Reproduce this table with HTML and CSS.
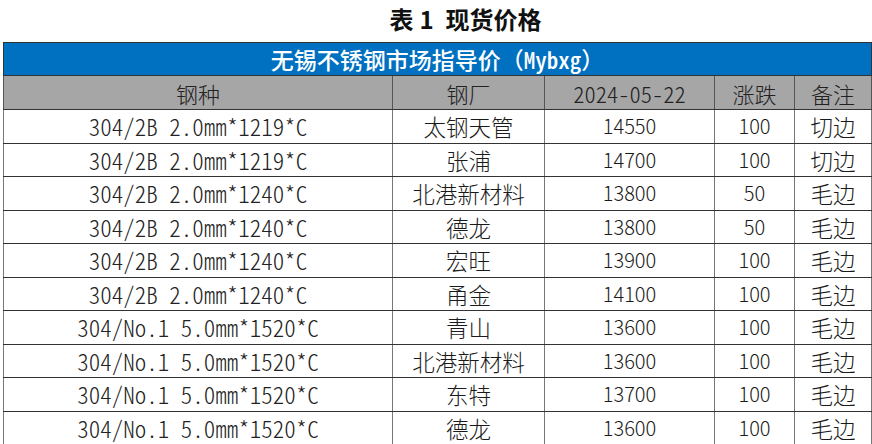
FILE: index.html
```html
<!DOCTYPE html>
<html lang="zh-CN">
<head>
<meta charset="utf-8">
<link rel="stylesheet" href="styles.css">
</head>
<body>
<div class="page">
  <h1 class="title">表<span class="num">1</span>现货价格</h1>
  <table class="price">
    <colgroup>
      <col class="c1"><col class="c2"><col class="c3"><col class="c4"><col class="c5">
    </colgroup>
    <thead>
      <tr class="banner"><th colspan="5">无锡不锈钢市场指导价（<span class="mono">Mybxg</span>）</th></tr>
      <tr class="head"><th>钢种</th><th>钢厂</th><th><span class="mono">2024-05-22</span></th><th>涨跌</th><th>备注</th></tr>
    </thead>
    <tbody>
      <tr><td><span class="mono">304/2B 2.0mm*1219*C</span></td><td>太钢天管</td><td class="n">14550</td><td class="n">100</td><td>切边</td></tr>
      <tr><td><span class="mono">304/2B 2.0mm*1219*C</span></td><td>张浦</td><td class="n">14700</td><td class="n">100</td><td>切边</td></tr>
      <tr><td><span class="mono">304/2B 2.0mm*1240*C</span></td><td>北港新材料</td><td class="n">13800</td><td class="n">50</td><td>毛边</td></tr>
      <tr><td><span class="mono">304/2B 2.0mm*1240*C</span></td><td>德龙</td><td class="n">13800</td><td class="n">50</td><td>毛边</td></tr>
      <tr><td><span class="mono">304/2B 2.0mm*1240*C</span></td><td>宏旺</td><td class="n">13900</td><td class="n">100</td><td>毛边</td></tr>
      <tr><td><span class="mono">304/2B 2.0mm*1240*C</span></td><td>甬金</td><td class="n">14100</td><td class="n">100</td><td>毛边</td></tr>
      <tr><td><span class="mono">304/No.1 5.0mm*1520*C</span></td><td>青山</td><td class="n">13600</td><td class="n">100</td><td>毛边</td></tr>
      <tr><td><span class="mono">304/No.1 5.0mm*1520*C</span></td><td>北港新材料</td><td class="n">13600</td><td class="n">100</td><td>毛边</td></tr>
      <tr><td><span class="mono">304/No.1 5.0mm*1520*C</span></td><td>东特</td><td class="n">13700</td><td class="n">100</td><td>毛边</td></tr>
      <tr><td><span class="mono">304/No.1 5.0mm*1520*C</span></td><td>德龙</td><td class="n">13600</td><td class="n">100</td><td>毛边</td></tr>
    </tbody>
  </table>
</div>
</body>
</html>
```

FILE: styles.css
```css
html, body {
  margin: 0;
  padding: 0;
  background: #ffffff;
  overflow: hidden;
}
body {
  font-family: "Noto Sans CJK SC", "Noto Sans", sans-serif;
  color: #1a1a1a;
}
.page {
  padding: 0 2px 0 3px;
}
.title {
  margin: 0;
  height: 42px;
  line-height: 38px;
  text-align: center;
  font-size: 24px;
  font-weight: bold;
  color: #111;
  padding-left: 58px;
}
.title .num {
  display: inline-block;
  margin: 0 12px 0 6px;
}
.price {
  border-collapse: collapse;
  table-layout: fixed;
  width: 868px;
}
.c1 { width: 389px; }
.c2 { width: 152px; }
.c3 { width: 170px; }
.c4 { width: 80px; }
.c5 { width: 77px; }
.price th, .price td {
  border: 1px solid #555;
  padding: 0;
  text-align: center;
  vertical-align: middle;
  white-space: nowrap;
  overflow: hidden;
  line-height: 24px;
}
.price td {
  height: 32.5px;
  font-size: 22.5px;
  font-weight: 300;
  color: #1a1a1a;
  border-left-color: #777;
  border-right-color: #777;
  border-top-color: #333;
  border-bottom-color: #333;
}
.price td.n {
  font-size: 20px;
}
.banner th {
  height: 32px;
  background: #0070c0;
  color: #ffffff;
  font-size: 23px;
  font-weight: 500;
  border-color: #333;
}
.head th {
  height: 33px;
  background: #a6a6a6;
  color: #222;
  font-size: 22px;
  font-weight: 300;
  border-top-color: #333;
  border-bottom-color: #333;
}
.mono {
  font-family: "Noto Sans CJK SC", sans-serif;
  font-feature-settings: "hwid" on;
  font-weight: 300;
  font-size: 23px;
  color: #222;
}
.head .mono {
  font-size: 22.5px;
}
.banner .mono {
  font-size: 23px;
  font-weight: 500;
  color: #ffffff;
}
```
